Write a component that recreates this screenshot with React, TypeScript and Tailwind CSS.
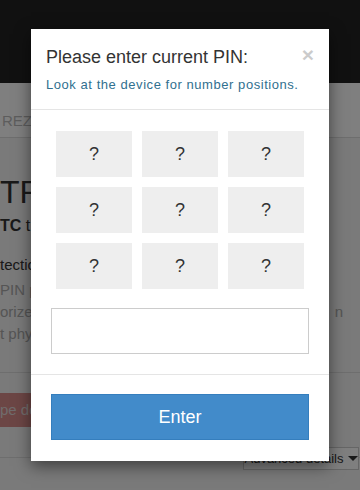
const keys = ['?', '?', '?', '?', '?', '?', '?', '?', '?'];

const PinModal = () => {
    return (
        <div className="absolute left-[31px] top-[29px] w-[298px] bg-white shadow-[0_5px_15px_rgba(0,0,0,0.5)]">
            {/* Header */}
            <div className="relative h-[81px] border-b border-[#e5e5e5] p-[15px]">
                <button className="absolute right-[15px] top-[15px] text-[21px] font-bold leading-none text-black opacity-20">
                    ×
                </button>
                <h4 className="text-[18px] leading-[26px] text-[#333]">Please enter current PIN:</h4>
                <p className="mt-[6px] text-[13px] leading-[18px] tracking-[0.55px] text-[#31708f]">
                    Look at the device for number positions.
                </p>
            </div>

            {/* Body */}
            <div className="border-b border-[#e5e5e5] p-[20px]">
                <div className="grid grid-cols-3 gap-[10px] px-[5px] pt-[1px]">
                    {keys.map((k, i) => (
                        <button
                            key={i}
                            className="flex h-[46px] items-center justify-center bg-[#eeeeee] text-[18px] text-[#333]"
                        >
                            {k}
                        </button>
                    ))}
                </div>
                <input
                    type="password"
                    className="mt-[19px] block h-[46px] w-full border border-[#cccccc] outline-none"
                />
            </div>

            {/* Footer */}
            <div className="px-[20px] pt-[19px] pb-[21px]">
                <button className="block h-[46px] w-full border border-[#357ebd] bg-[#428bca] text-[18px] text-white">
                    Enter
                </button>
            </div>
        </div>
    );
};

export default function App() {
    return (
        <div
            className="relative h-[490px] w-[360px] overflow-hidden bg-[#f4f4f4] text-[#333]"
            style={{ fontFamily: '"Liberation Sans", Arial, sans-serif' }}
        >
            {/* Page behind the backdrop */}
            <div className="h-[83px] bg-[#222]" />
            <div className="flex h-[55px] items-center border-b border-[#dddddd] bg-white pl-[2px] pt-[22px] text-[15px] text-[#bbbbbb]">
                REZO
            </div>
            <div className="pt-[36px]">
                <h1 className="text-[32px] leading-[36px] text-[#333]">TRE</h1>
                <p className="mt-[6px] text-[16px] leading-[20px]">
                    <b>TC</b> t
                </p>
                <p className="mt-[19px] text-[15px] leading-[20px]">tectio</p>
                <p className="mt-[4px] text-[15px] leading-[22px] text-[#aaaaaa]">
                    PIN pr
                    <br />
                    <span className="flex justify-between pr-[17px]">
                        <span>orized</span>
                        <span>n</span>
                    </span>
                    t phy
                </p>
                <div className="mt-[27px] border-t border-[#dddddd]" />
                <div className="mt-[20px] flex">
                    <div className="flex h-[34px] w-[80px] items-center bg-[#d98c8a] text-[15px] text-[#e0d8d8]">
                        pe de
                    </div>
                </div>
                <div className="mt-[30px] border-t border-[#dddddd]" />
                <div className="-mt-[11px] flex justify-end pr-[1px]">
                    <button className="flex h-[23px] w-[116px] items-center justify-center gap-[4px] border border-[#cccccc] bg-white text-[13px] text-[#333]">
                        Advanced details
                        <span className="inline-block h-0 w-0 border-x-[5px] border-t-[5px] border-x-transparent border-t-[#333]" />
                    </button>
                </div>
            </div>

            {/* Backdrop */}
            <div className="absolute inset-0 bg-black/50" />

            <PinModal />
        </div>
    );
}
